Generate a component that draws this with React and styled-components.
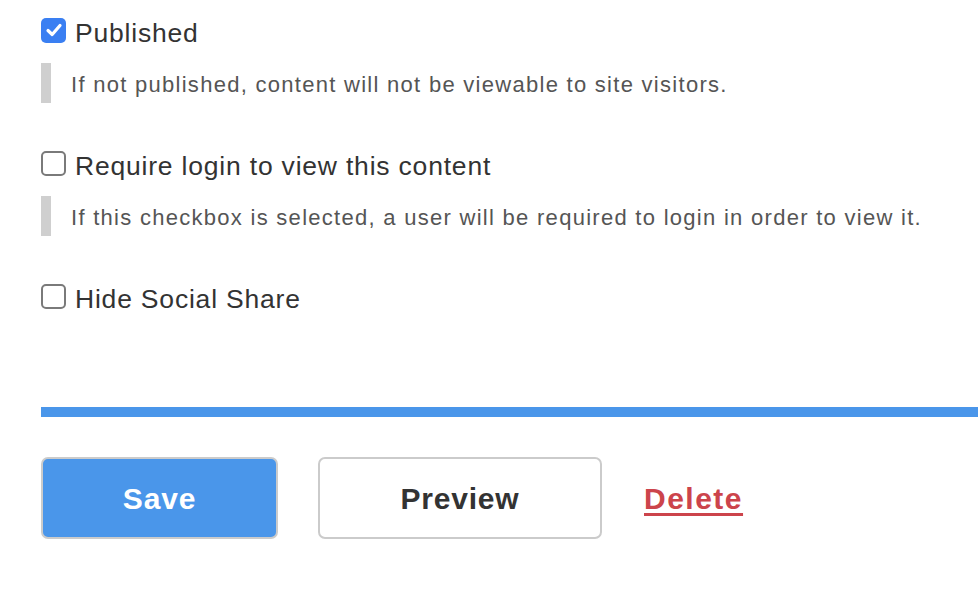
import React from "react";
import styled, { createGlobalStyle } from "styled-components";

const Global = createGlobalStyle`
  html, body { margin: 0; padding: 0; background: #fff; }
  body { font-family: "Liberation Sans", Arial, Helvetica, sans-serif; overflow: hidden; }
`;

const Page = styled.div`
  padding: 12px 0 0 41px;
  width: 978px;
  box-sizing: border-box;
`;

const Group = styled.div`
  margin-top: ${(p) => (p.$first ? 0 : 42)}px;
`;

const OptionRow = styled.label`
  display: flex;
  align-items: center;
  gap: 9px;
  height: 36px;
  cursor: pointer;
`;

const Box = styled.span`
  width: 25px;
  height: 25px;
  box-sizing: border-box;
  border-radius: 5px;
  flex: none;
  display: flex;
  align-items: center;
  justify-content: center;
  background: ${(p) => (p.$checked ? "#3a7ff2" : "#fff")};
  border: ${(p) => (p.$checked ? "none" : "2px solid #7a7a7a")};
`;

const LabelText = styled.span`
  font-size: 26.5px;
  letter-spacing: 0.8px;
  color: #333;
  line-height: 36px;
  padding-top: 6px;
`;

const Help = styled.div`
  margin-top: 15px;
  border-left: 10px solid #cfcfcf;
  padding: 3px 0 0 20px;
  box-sizing: border-box;
  height: 40px;
  line-height: 37px;
  font-size: 22px;
  letter-spacing: 1.28px;
  color: #555;
  white-space: nowrap;
`;

const Divider = styled.div`
  margin-top: 93px;
  height: 10px;
  background: #4a96ea;
`;

const Actions = styled.div`
  margin-top: 40px;
  display: flex;
  align-items: center;
`;

const Button = styled.button`
  height: 82px;
  width: ${(p) => p.$w}px;
  margin-right: ${(p) => p.$mr}px;
  box-sizing: border-box;
  border: 2px solid #cbcbcb;
  border-radius: 7px;
  background: ${(p) => (p.$primary ? "#4a96ea" : "#fff")};
  color: ${(p) => (p.$primary ? "#fff" : "#333")};
  font-family: "Liberation Sans", Arial, Helvetica, sans-serif;
  font-weight: bold;
  font-size: 30px;
  letter-spacing: 0.8px;
  padding: 2px 0 0;
  cursor: pointer;
`;

const DeleteLink = styled.a`
  color: #cc444b;
  font-weight: bold;
  font-size: 30px;
  letter-spacing: 1.5px;
  text-decoration: underline;
  text-decoration-thickness: 3px;
  text-underline-offset: 4px;
  padding-top: 2px;
  cursor: pointer;
`;

function Check({ checked }) {
  return (
    <Box $checked={checked}>
      {checked && (
        <svg width="18" height="18" viewBox="0 0 18 18">
          <path d="M3 9.5 L7.2 13.5 L15 4.5" fill="none" stroke="#fff" strokeWidth="3.2" strokeLinecap="round" strokeLinejoin="round" />
        </svg>
      )}
    </Box>
  );
}

const options = [
  { label: "Published", checked: true, help: "If not published, content will not be viewable to site visitors." },
  { label: "Require login to view this content", checked: false, help: "If this checkbox is selected, a user will be required to login in order to view it." },
  { label: "Hide Social Share", checked: false },
];

export default function App() {
  return (
    <>
      <Global />
      <Page>
        {options.map((o, i) => (
          <Group key={o.label} $first={i === 0}>
            <OptionRow>
              <Check checked={o.checked} />
              <LabelText>{o.label}</LabelText>
            </OptionRow>
            {o.help && <Help>{o.help}</Help>}
          </Group>
        ))}
        <Divider />
        <Actions>
          <Button $primary $w={237} $mr={40}>Save</Button>
          <Button $w={284} $mr={42}>Preview</Button>
          <DeleteLink>Delete</DeleteLink>
        </Actions>
      </Page>
    </>
  );
}
